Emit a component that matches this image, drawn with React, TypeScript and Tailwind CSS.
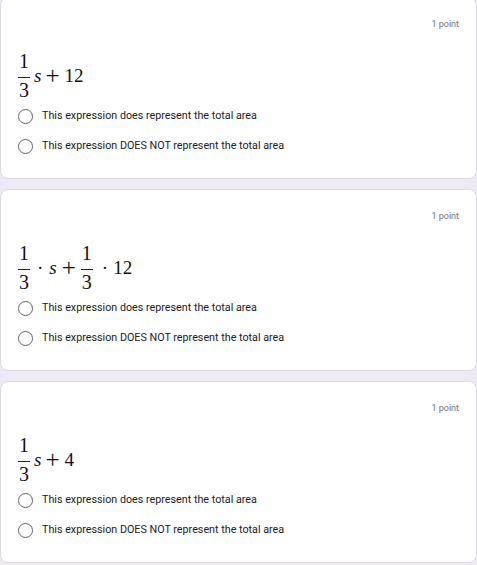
import React from "react"

const Frac = ({ n, d }: { n: string; d: string }) => (
    <span className="inline-flex flex-col items-center leading-none text-[20px]">
        <span className="px-[1px] pb-[6px]">{n}</span>
        <span className="w-full border-t border-[#222]" />
        <span className="px-[1px] pt-[2px]">{d}</span>
    </span>
)

const Plus = ({ cls }: { cls: string }) => <span className={`text-[25px] leading-none ${cls}`}>+</span>

const Radio = ({ label }: { label: string }) => (
    <div className="flex items-center h-[30px]">
        <span className="w-[15px] h-[15px] rounded-full border-[1.5px] border-[#5f6368] ml-[17px] shrink-0" />
        <span className="ml-[9px] text-[10.75px] text-[#202124]">{label}</span>
    </div>
)

const Card = ({ expr, first }: { expr: React.ReactNode; first?: boolean }) => (
    <div className={`bg-white border border-[#dadce0] rounded-lg h-[182px] ${first ? "-mt-[3px]" : "mt-[10px]"}`}>
        <div className="flex justify-end pr-[17px] pt-[20px] text-[9px] text-[#70757a] leading-[12px]">1 point</div>
        <div className="pl-[17px] mt-[20px] h-[51px] flex items-center leading-none text-[19px] text-[#111] font-['Liberation_Serif','Times_New_Roman',serif]">
            {expr}
        </div>
        <div>
            <Radio label="This expression does represent the total area" />
            <Radio label="This expression DOES NOT represent the total area" />
        </div>
    </div>
)

export default function App() {
    return (
        <div className="w-[477px] h-[565px] overflow-hidden bg-[#edeaf6] font-['Roboto',sans-serif]">
            <Card
                first
                expr={
                    <>
                        <Frac n="1" d="3" />
                        <span className="italic ml-[4px]">s</span>
                        <Plus cls="ml-[4px] mr-[5px]" />
                        <span>12</span>
                    </>
                }
            />
            <Card
                expr={
                    <>
                        <Frac n="1" d="3" />
                        <span className="ml-[7px] mr-[6px]">·</span>
                        <span className="italic">s</span>
                        <Plus cls="ml-[5px] mr-[5px]" />
                        <Frac n="1" d="3" />
                        <span className="ml-[9px] mr-[5px]">·</span>
                        <span>12</span>
                    </>
                }
            />
            <Card
                expr={
                    <>
                        <Frac n="1" d="3" />
                        <span className="italic ml-[4px]">s</span>
                        <Plus cls="ml-[4px] mr-[5px]" />
                        <span>4</span>
                    </>
                }
            />
        </div>
    )
}
